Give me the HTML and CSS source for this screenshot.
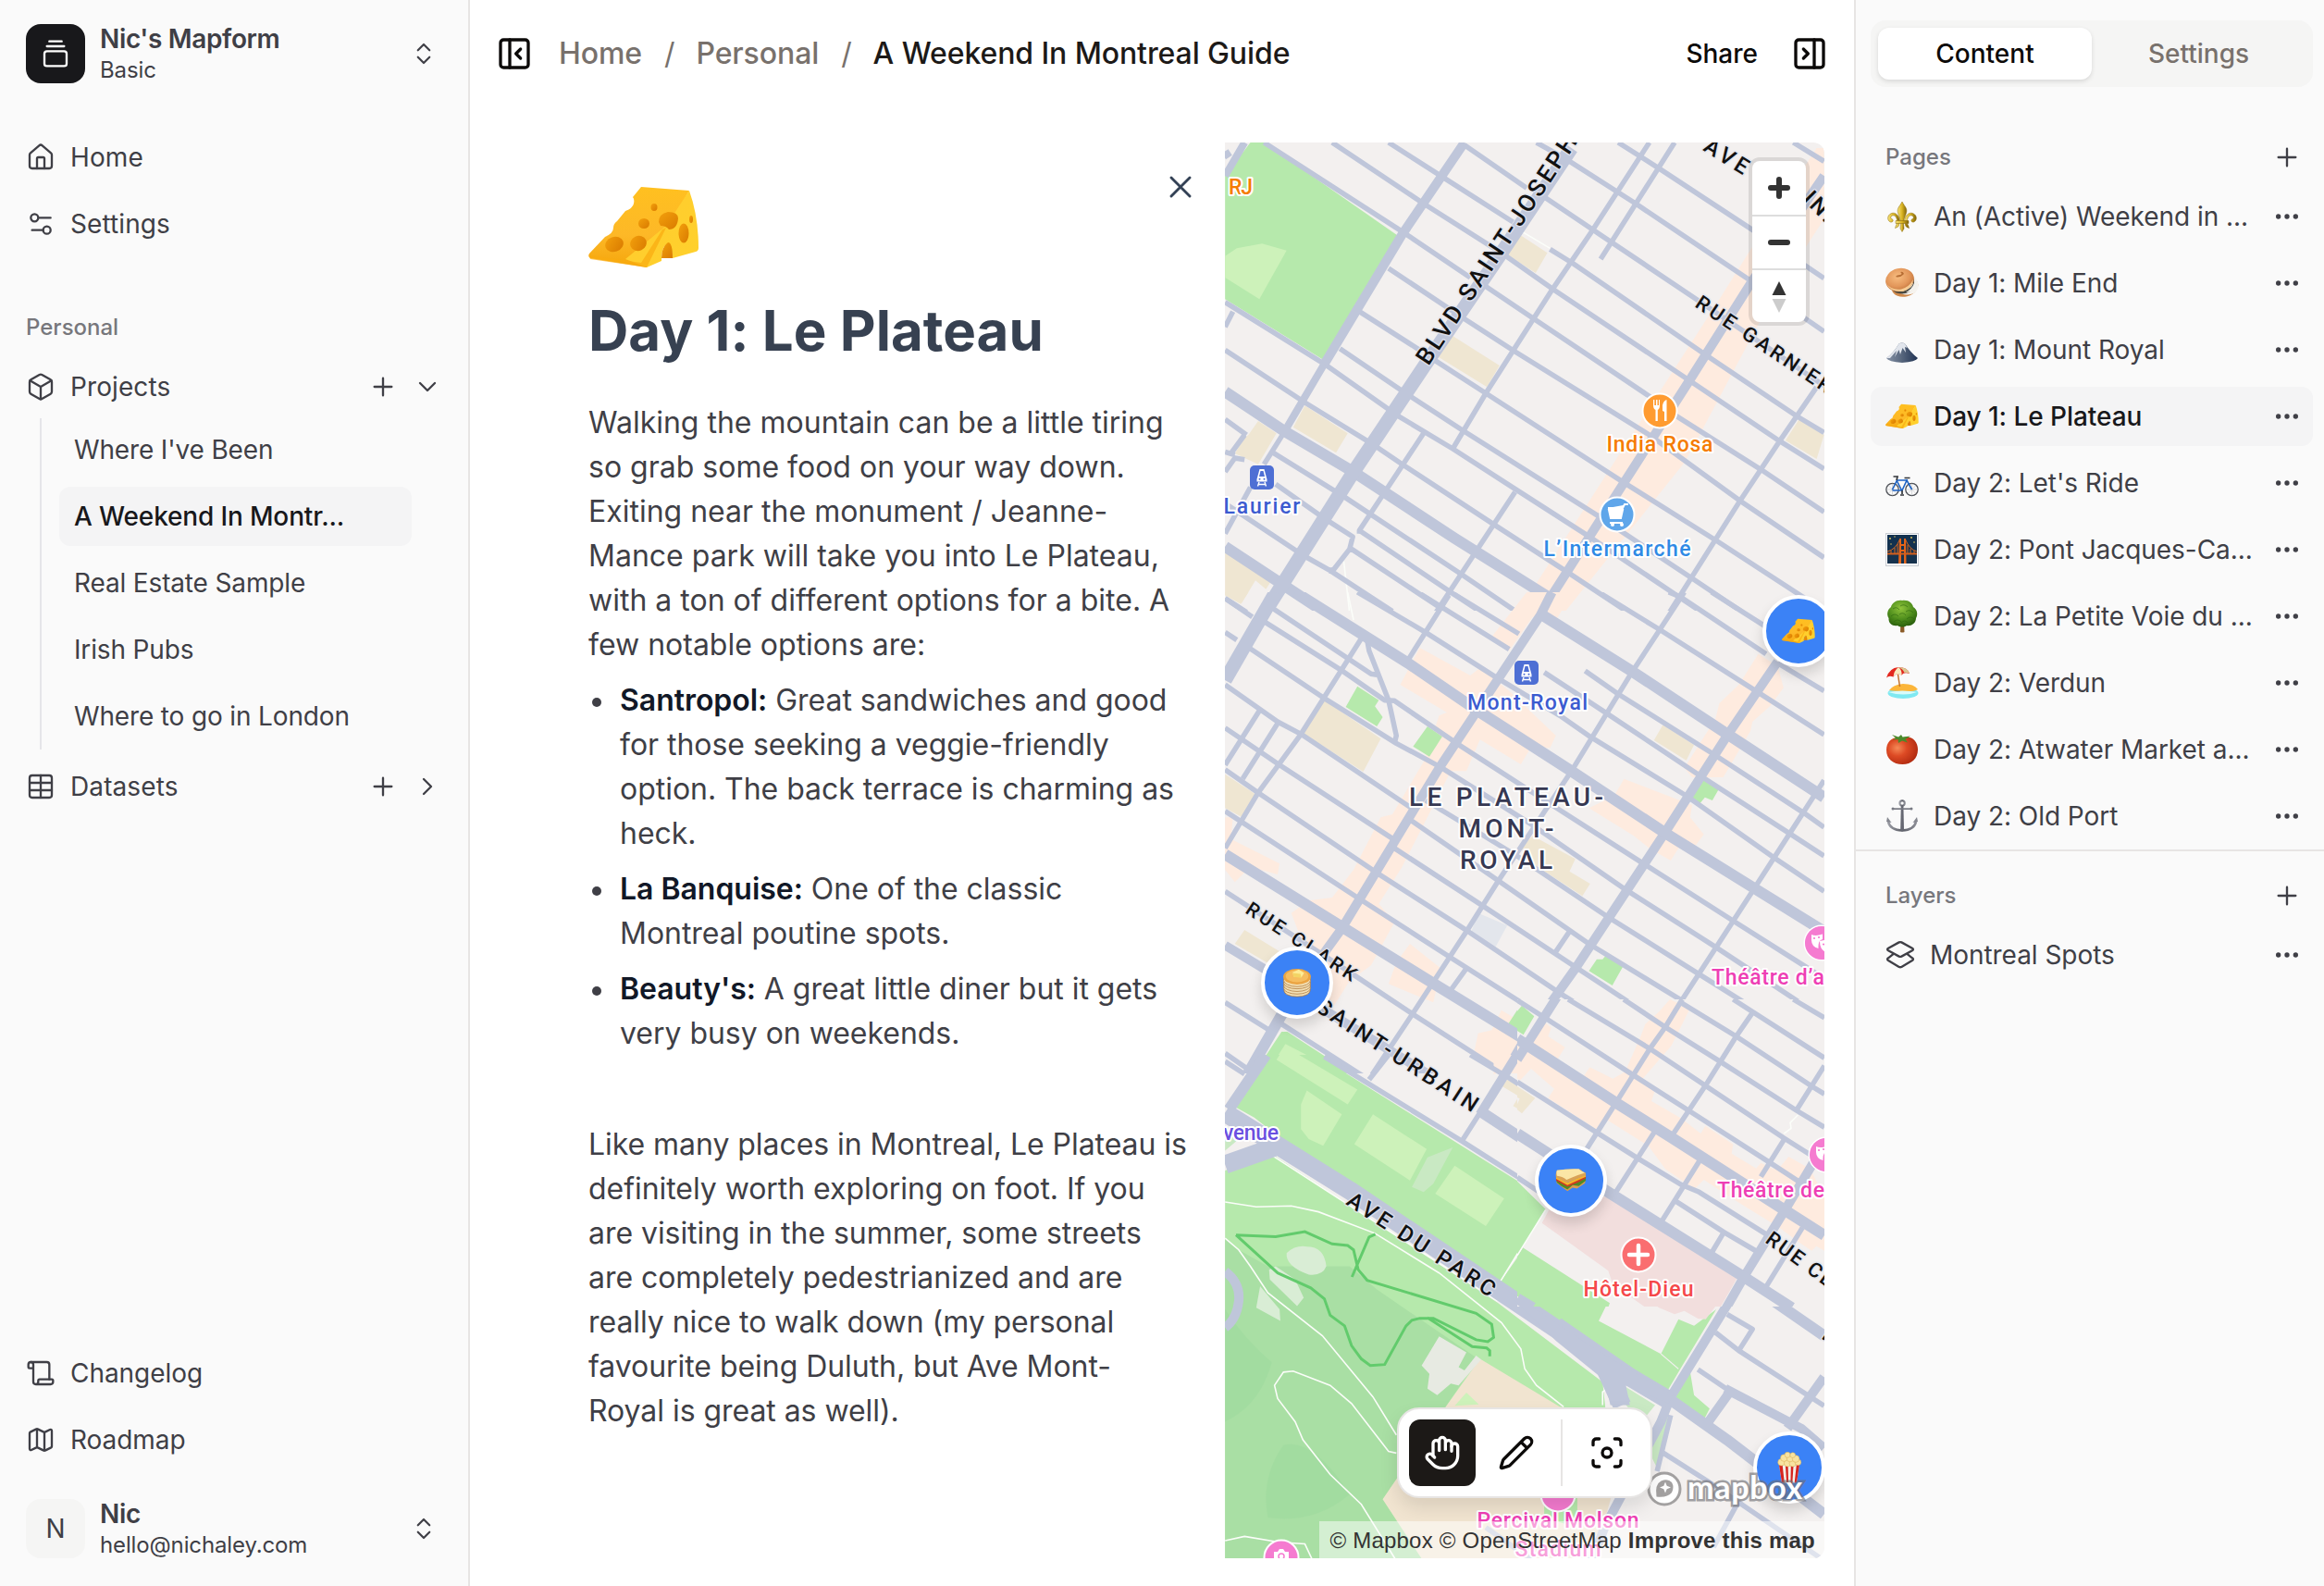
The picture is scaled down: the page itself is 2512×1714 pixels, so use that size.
FILE: index.html
```html
<!DOCTYPE html>
<html lang="en">
<head>
<meta charset="utf-8">
<title>Mapform</title>
<link rel="stylesheet" href="styles.css">
</head>
<body>
<svg class="defs" width="0" height="0" aria-hidden="true">
  <defs>
    <linearGradient id="gCheese" x1="0" y1="0" x2="0" y2="1"><stop offset="0" stop-color="#ffc020"/><stop offset=".6" stop-color="#fdb827"/><stop offset="1" stop-color="#f5a60c"/></linearGradient>
    <linearGradient id="gCheeseSide" x1="0" y1="0" x2="1" y2="1"><stop offset="0" stop-color="#ffcb2e"/><stop offset="1" stop-color="#ffd12c"/></linearGradient>
    <linearGradient id="gHole" x1="0" y1="0" x2="1" y2="1"><stop offset="0" stop-color="#f3a00c"/><stop offset="1" stop-color="#d97a00"/></linearGradient>
    <linearGradient id="gGold" x1="0" y1="0" x2="1" y2="0"><stop offset="0" stop-color="#f6e27a"/><stop offset=".5" stop-color="#d9b320"/><stop offset="1" stop-color="#7d6208"/></linearGradient>
    <radialGradient id="gBagel" cx=".45" cy=".35" r=".7"><stop offset="0" stop-color="#f8bd80"/><stop offset=".6" stop-color="#e2965a"/><stop offset="1" stop-color="#b86a32"/></radialGradient>
    <linearGradient id="gRock" x1="0" y1="0" x2="1" y2="0"><stop offset="0" stop-color="#8793a6"/><stop offset=".5" stop-color="#56657c"/><stop offset="1" stop-color="#1f3152"/></linearGradient>
    <radialGradient id="gTree" cx=".45" cy=".3" r=".7"><stop offset="0" stop-color="#8fc43b"/><stop offset=".6" stop-color="#4e8d1c"/><stop offset="1" stop-color="#2a5f0d"/></radialGradient>
    <radialGradient id="gTomato" cx=".35" cy=".4" r=".75"><stop offset="0" stop-color="#f58a57"/><stop offset=".4" stop-color="#dd4a24"/><stop offset="1" stop-color="#a8240c"/></radialGradient>
    <linearGradient id="gSteel" x1="0" y1="0" x2="1" y2="0"><stop offset="0" stop-color="#9a9ca4"/><stop offset=".5" stop-color="#5b5d66"/><stop offset="1" stop-color="#8b8d95"/></linearGradient>
    <symbol id="cheese" viewBox="0 0 120 88">
      <path d="M57 0 109 4 63 87 2 77Q-1 75 1 72L18 54Q27 50 27 44 27 40 31 37L40 26Q48 23 49 18 50 13 48 11Z" fill="url(#gCheese)"/>
      <path d="M109 4Q119 32 119 66 119 69 116 70L91 77Q90 62 85 62 79 64 79 80L63 87 40 78 84 42Z" fill="url(#gCheeseSide)"/>
      <path d="M1 74 57 82 80 46 84 44 63 87 2 78Z" fill="#f9ab10" opacity=".7"/>
      <g fill="url(#gHole)"><ellipse cx="28" cy="62" rx="10" ry="8" transform="rotate(-20 28 62)"/><ellipse cx="54" cy="61" rx="9" ry="8" transform="rotate(-25 54 61)"/><ellipse cx="60" cy="39.500" rx="6" ry="5.500"/><ellipse cx="71" cy="22" rx="3.500" ry="4"/><path d="M76 38Q76 29 86 27 97 27 97 34 96 46 87 46 84 42 78 42Z"/><ellipse cx="103" cy="50" rx="5.500" ry="10.500"/><ellipse cx="111" cy="35" rx="2" ry="4"/><path d="M79 77Q79 65 86 60 91 60 91 77Z"/></g>
    </symbol>
    <symbol id="fleur" viewBox="0 0 36 36">
      <g fill="url(#gGold)" stroke="#8a6b0c" stroke-width=".5"><path d="M18 2C20.500 7 24 9 22.500 14 21.500 17.500 20 20 19.700 23H16.300C16 20 14.500 17.500 13.500 14 12 9 15.500 7 18 2Z"/><path d="M15.500 23C15 17 11 13 6.500 14.500 1.500 16.500 1.500 22.500 5.500 24 8 24.500 9 22 7.500 21 6 20.500 5 19 6.500 17.500 9.500 15.500 12.500 18.500 12.500 23Z"/><path d="M20.500 23C21 17 25 13 29.500 14.500 34.500 16.500 34.500 22.500 30.500 24 28 24.500 27 22 28.500 21 30 20.500 31 19 29.500 17.500 26.500 15.500 23.500 18.500 23.500 23Z"/><path d="M11 22.500H25V25.500H11Z"/><path d="M16.500 25.500H19.500L20 31 18 34.500 16 31Z"/><path d="M15 25.500Q14.500 30 10.500 30.500 11 28 12.500 25.500ZM21 25.500Q21.500 30 25.500 30.500 25 28 23.500 25.500Z"/></g>
    </symbol>
    <symbol id="bagel" viewBox="0 0 36 36">
      <ellipse cx="21" cy="22" rx="14.500" ry="10.500" transform="rotate(-15 21 22)" fill="#d08a4c"/>
      <ellipse cx="21" cy="18.500" rx="15" ry="11.500" transform="rotate(20 21 18.500)" fill="#f6f3ee"/>
      <path d="M8 25Q18 30 28 22 31 18 30 13 34 18 31 23 25 31 14 29 9 28 8 25Z" fill="#4a4940"/>
      <path d="M31 13Q36 18 33 24 28 28 22 28 29 24 31 18Z" fill="#f3f1ec"/>
      <ellipse cx="15.500" cy="14.500" rx="15.500" ry="12.500" transform="rotate(-12 15.500 14.500)" fill="url(#gBagel)"/>
      <path d="M1 18Q6 26 17 24.500 26 22 30 14 29 24 19 27 5 28 1 18Z" fill="#f6cd94"/>
      <path d="M11 11Q15 13 20 8 19 5 16 6 19 8 16 9 12 9 11 11Z" fill="#a85c24" opacity=".8"/>
    </symbol>
    <symbol id="mountain" viewBox="0 0 36 36">
      <path d="M1 27Q9 21 14.500 11.500 18 9.500 21.500 12 27 21 35 27 33 31 18 32 3 31 1 27Z" fill="url(#gRock)"/>
      <path d="M14.500 11.500Q18 9.500 21.500 12L23.500 16 21 15 22 21 18.500 16 16 23 14.500 18 10 26 12 19 5 27 1 27Q9 21 14.500 11.500Z" fill="#e1e5ec"/>
    </symbol>
    <symbol id="bike" viewBox="0 0 36 36">
      <g fill="none" stroke="#4b4e54" stroke-width="1.300"><circle cx="7.500" cy="25" r="6.700"/><circle cx="28.500" cy="25" r="6.700"/></g>
      <g fill="none" stroke="#b6b9be" stroke-width=".5"><path d="M7.500 18.500V31.500M1 25H14M3 20.500 12 29.500M12 20.500 3 29.500M28.500 18.500V31.500M22 25H35M24 20.500 33 29.500M33 20.500 24 29.500"/></g>
      <path d="M7.500 25 12.500 15H23L28.500 25M12 15 17.500 26H7.500M18 26 23.500 14" fill="none" stroke="#1c62c4" stroke-width="1.600"/>
      <path d="M8.500 11H13L12 15M20.500 12.500H26.500M18 26V30M16 31H20" fill="none" stroke="#33363b" stroke-width="1.700"/>
    </symbol>
    <symbol id="bridge" viewBox="0 0 36 36">
      <path d="M0 0H36V36H0Z" fill="#c8ccd2"/><path d="M1 1H35V35H1Z" fill="#fff"/><path d="M2 2H34V33H2Z" fill="#12314f"/><path d="M2 24H34V33H2Z" fill="#16324d"/>
      <path d="M15 6H17V33H14ZM20 6H22L22.500 33H20Z" fill="#e2641a"/><path d="M16 12H21V14H16ZM16 18H21V20H16Z" fill="#e2641a"/>
      <path d="M2 21.500H34V23.500H2Z" fill="#d35f1d"/><path d="M2 20Q11 18 15.500 7M34 20Q26 18 21.500 7M6 19V22M10 16V22M13 12V22M24 13V22M27 17V22M31 19V22" fill="none" stroke="#d9681f" stroke-width="1"/>
      <g fill="#f0d15c"><circle cx="5" cy="6" r=".9"/><circle cx="10" cy="4" r=".7"/><circle cx="28" cy="5" r=".9"/><circle cx="31" cy="10" r=".8"/><circle cx="6" cy="12" r=".7"/></g>
    </symbol>
    <symbol id="tree" viewBox="0 0 36 36">
      <path d="M16.500 25H20L20.500 35Q18 36 16 35Z" fill="#8a5a26"/>
      <path d="M18 1C25 0 29 4 30 8 35 11 35 17 33 20 33 26 27 29 23 28 20 30 16 30 13 28 8 29 3 26 3.500 20 1 16 2 11 6 8 7 4 12 0 18 1Z" fill="url(#gTree)"/>
      <g fill="none" stroke="#2d660f" stroke-width="1" opacity=".6"><path d="M8 10Q12 7 15 11M16 7Q20 4 24 8M22 13Q26 10 30 14M6 18Q10 14 14 18M15 16Q19 13 22 17M23 21Q27 17 31 21M9 24Q13 20 17 24M17 25Q21 21 24 25"/></g>
    </symbol>
    <symbol id="beach" viewBox="0 0 36 36">
      <ellipse cx="19" cy="29" rx="16.500" ry="6" fill="#7fe9f2"/><path d="M4 26Q8 20 19 19 31 19 35 25 30 28 20 27 10 27 4 26Z" fill="#fbb53a"/><path d="M3 28Q18 25 34 28 20 33 3 28Z" fill="#d9fbfa"/>
      <path d="M13.500 9 15.500 22" stroke="#c4722c" stroke-width="1.500"/>
      <path d="M1 12.500Q4 2 14 1 24 1 26 8 20 6 17.500 9.500 11 6.500 8.500 11.500 4 9.500 1 12.500Z" fill="#e3281f"/><path d="M14 1Q9 5 8.500 11.500 11 6.500 17.500 9.500 18 4 14 1Z" fill="#f8ecc1"/><path d="M14 1Q24 1 26 8 22 6 20.500 7 19 3 14 1Z" fill="#d9cb95"/>
    </symbol>
    <symbol id="tomato" viewBox="0 0 36 36">
      <path d="M18 5.500C28 2 35 9 35 18 35 28 28 34 18.500 34 8 34 1 28 1 18.500 1 9 8 3 18 5.500Z" fill="url(#gTomato)"/>
      <path d="M7 2 14 4.500 17 2 18.500 4.500 27 3.500 21.500 7 24 10.500 18 8.500 14 11 13.500 7 8 7.500 11 5.500Z" fill="#4a8a2a"/>
    </symbol>
    <symbol id="anchor" viewBox="0 0 36 36">
      <g fill="none" stroke="url(#gSteel)" stroke-width="2"><circle cx="18.100" cy="4" r="2.700"/><path d="M3 24Q5 33 18 33.500 31 33 33 24" stroke-width="2.600"/></g>
      <path d="M16.800 7H19.400L20 32 18 35 16.200 32Z" fill="#666872"/><path d="M8 9.300H28V11H8Z" fill="#777982"/><circle cx="8" cy="10.100" r="1.500" fill="#777982"/><circle cx="28" cy="10.100" r="1.500" fill="#777982"/>
      <path d="M2 19 6.500 25 1 24ZM34 19 29.500 25 35 24Z" fill="#85878f"/>
    </symbol>
    <symbol id="pancakes" viewBox="0 0 36 36">
      <g stroke="#a56a2a" stroke-width=".7" fill="#f2dfb4"><ellipse cx="18" cy="27" rx="15" ry="7"/><ellipse cx="18" cy="24" rx="15.500" ry="7"/><ellipse cx="18" cy="21" rx="15.500" ry="7"/><ellipse cx="18" cy="18" rx="15.500" ry="7"/><ellipse cx="18" cy="15" rx="15.500" ry="7.500"/></g>
      <ellipse cx="18" cy="11" rx="15.800" ry="9" fill="#eba443"/><ellipse cx="18" cy="10.500" rx="13" ry="7" fill="#f6bd5f"/>
      <path d="M13 6 20 3 26 7 23 12 14 11Z" fill="#fdeb96"/><path d="M13 7 14 11.500 23 12.500 22 8Z" fill="#f3d465"/>
    </symbol>
    <symbol id="sandwich" viewBox="0 0 36 36">
      <path d="M1 19 14 25 35 15 34 21 25 27 20 26 14 30 2 21Z" fill="#d99c4f"/><path d="M1 16 14 23 35 14 35 18 27 24 20 23 14 28 7 24 2 20Z" fill="#4f8a28"/><path d="M1 15 14 21 35 12 35 15 26 20 14 25 1 18Z" fill="#cf3b21"/><path d="M1 13.500 14 20 35 11 35 13.500 25 18 14 23 1 16Z" fill="#f5b62a"/>
      <path d="M2 6Q16 4 29 5 31 8 35 9L35 12 13 20.500 1 14Q0 10 2 6Z" fill="#d9a256"/><path d="M2 6Q14 4 27 4.500 29 7 34 9 24 12 13 17 8 13 2 12.500 1 9 2 6Z" fill="#fbe6a6"/>
    </symbol>
    <symbol id="popcorn" viewBox="0 0 36 36">
      <path d="M6 13H30L26.500 35Q18 37 9.500 35Z" fill="#f3efe9"/><path d="M6 13H10L12.500 35.500 9.500 35ZM13.500 13H16.500L17 36H15ZM20 13H23L21.500 36H19.500ZM26.500 13H30L26.500 35 24 35.500Z" fill="#d6251f"/>
      <g fill="#f8e3a0" stroke="#d6a94b" stroke-width=".5"><circle cx="9" cy="12" r="4"/><circle cx="16" cy="13" r="4"/><circle cx="22" cy="13" r="4"/><circle cx="28" cy="12" r="3.500"/><circle cx="12" cy="7" r="4"/><circle cx="19" cy="7.500" r="4"/><circle cx="25.500" cy="8" r="4"/><circle cx="16" cy="3.500" r="3.200"/><circle cx="22" cy="3.800" r="3"/></g>
    </symbol>
    <symbol id="plus" viewBox="0 0 24 24"><path d="M5 12h14M12 5v14"/></symbol>
    <symbol id="updown" viewBox="0 0 24 24"><path d="m7 15 5 5 5-5M7 9l5-5 5 5"/></symbol>
    <symbol id="dots" viewBox="0 0 24 24"><circle cx="12" cy="12" r="1"/><circle cx="19" cy="12" r="1"/><circle cx="5" cy="12" r="1"/></symbol>
    <symbol id="train" viewBox="0 0 26 26"><rect x="0" y="0" width="26" height="26" rx="5" fill="#4e6fd4"/><path d="M10.500 4H15.500L18.500 15V17.500H7.500V15Z" fill="#fff"/><path d="M11.500 6H14.500L16 12H10Z" fill="#4e6fd4"/><circle cx="10.500" cy="14.800" r="1" fill="#4e6fd4"/><circle cx="15.500" cy="14.800" r="1" fill="#4e6fd4"/><path d="M10 18 8.500 22.500M16 18 17.500 22.500M9 20.500H17" stroke="#fff" stroke-width="1.400"/></symbol>
    <symbol id="mask" viewBox="0 0 36 36"><circle cx="18" cy="18" r="18" fill="#f57bd0"/><path d="M7 9Q12 11 19 8.500V14Q14 15 14.500 24 7 22 7 15Z" fill="#fff"/><path d="M16 16Q22 14 29 15.500 29 27 23 28 16 26 16 16Z" fill="#fff"/><g fill="#f57bd0"><circle cx="10" cy="13" r="1.100"/><circle cx="15" cy="12" r="1.100"/><circle cx="20" cy="19.500" r="1.100"/><circle cx="25" cy="19.500" r="1.100"/></g></symbol>
  </defs>
</svg>
<div class="app">
  <aside class="side">
    <div class="account">
      <div class="logo"><svg class="ic" viewBox="0 0 24 24"><path d="M7 2h10M5 6h14"/><rect x="3" y="10" width="18" height="12" rx="2"/></svg></div>
      <div class="who"><strong>Nic's Mapform</strong><span>Basic</span></div>
      <svg class="ic ic28"><use href="#updown"/></svg>
    </div>
    <nav class="menu">
      <a class="item"><svg class="ic" viewBox="0 0 24 24"><path d="M15 21v-8a1 1 0 0 0-1-1h-4a1 1 0 0 0-1 1v8"/><path d="M3 10a2 2 0 0 1 .709-1.528l7-5.999a2 2 0 0 1 2.582 0l7 5.999A2 2 0 0 1 21 10v9a2 2 0 0 1-2 2H5a2 2 0 0 1-2-2z"/></svg><span>Home</span></a>
      <a class="item"><svg class="ic" viewBox="0 0 24 24"><path d="M20 7h-9M14 17H5"/><circle cx="17" cy="17" r="3"/><circle cx="7" cy="7" r="3"/></svg><span>Settings</span></a>
    </nav>
    <h2 class="label">Personal</h2>
    <div class="item group"><svg class="ic" viewBox="0 0 24 24"><path d="M21 8a2 2 0 0 0-1-1.730l-7-4a2 2 0 0 0-2 0l-7 4A2 2 0 0 0 3 8v8a2 2 0 0 0 1 1.730l7 4a2 2 0 0 0 2 0l7-4A2 2 0 0 0 21 16Z"/><path d="m3.300 7 8.700 5 8.700-5M12 22V12"/></svg><span class="grow">Projects</span><svg class="ic"><use href="#plus"/></svg><svg class="ic" viewBox="0 0 24 24"><path d="m6 9 6 6 6-6"/></svg></div>
    <div class="tree">
      <a class="leaf">Where I've Been</a>
      <a class="leaf active">A Weekend In Montr...</a>
      <a class="leaf">Real Estate Sample</a>
      <a class="leaf">Irish Pubs</a>
      <a class="leaf">Where to go in London</a>
    </div>
    <div class="item group"><svg class="ic" viewBox="0 0 24 24"><path d="M12 3v18M3 9h18M3 15h18"/><rect x="3" y="3" width="18" height="18" rx="2"/></svg><span class="grow">Datasets</span><svg class="ic"><use href="#plus"/></svg><svg class="ic" viewBox="0 0 24 24"><path d="m9 18 6-6-6-6"/></svg></div>
    <nav class="menu bottom">
      <a class="item"><svg class="ic" viewBox="0 0 24 24"><path d="M19 17V5a2 2 0 0 0-2-2H4"/><path d="M8 21h12a2 2 0 0 0 2-2v-1a1 1 0 0 0-1-1H11a1 1 0 0 0-1 1v1a2 2 0 1 1-4 0V5a2 2 0 1 0-4 0v2a1 1 0 0 0 1 1h3"/></svg><span>Changelog</span></a>
      <a class="item"><svg class="ic" viewBox="0 0 24 24"><path d="M14.106 5.553a2 2 0 0 0 1.788 0l3.659-1.830A1 1 0 0 1 21 4.619v12.764a1 1 0 0 1-.553.894l-4.553 2.277a2 2 0 0 1-1.788 0l-4.212-2.106a2 2 0 0 0-1.788 0l-3.659 1.830A1 1 0 0 1 3 19.381V6.618a1 1 0 0 1 .553-.894l4.553-2.277a2 2 0 0 1 1.788 0zM15 5.764v15M9 3.236v15"/></svg><span>Roadmap</span></a>
    </nav>
    <div class="account user">
      <div class="avatar">N</div>
      <div class="who"><strong>Nic</strong><span>hello@nichaley.com</span></div>
      <svg class="ic ic28"><use href="#updown"/></svg>
    </div>
  </aside>

  <main class="main">
    <header class="top">
      <svg class="ic bold" viewBox="0 0 24 24"><rect x="3" y="3" width="18" height="18" rx="2"/><path d="M9 3v18M16 15l-3-3 3-3"/></svg>
      <div class="crumbs"><span>Home</span><i>/</i><span>Personal</span><i>/</i><b>A Weekend In Montreal Guide</b></div>
      <span class="share">Share</span>
      <svg class="ic bold" viewBox="0 0 24 24"><rect x="3" y="3" width="18" height="18" rx="2"/><path d="M15 3v18M8 9l3 3-3 3"/></svg>
    </header>
    <div class="content">
      <article class="article">
        <svg class="close" viewBox="0 0 24 24"><path d="M18 6 6 18M6 6l12 12"/></svg>
        <svg class="hero"><use href="#cheese"/></svg>
        <h1>Day 1: Le Plateau</h1>
        <p>Walking the mountain can be a little tiring<br>so grab some food on your way down.<br>Exiting near the monument / Jeanne-<br>Mance park will take you into Le Plateau,<br>with a ton of different options for a bite. A<br>few notable options are:</p>
        <ul>
          <li><b>Santropol:</b> Great sandwiches and good<br>for those seeking a veggie-friendly<br>option. The back terrace is charming as<br>heck.</li>
          <li><b>La Banquise:</b> One of the classic<br>Montreal poutine spots.</li>
          <li><b>Beauty's:</b> A great little diner but it gets<br>very busy on weekends.</li>
        </ul>
        <p class="after">Like many places in Montreal, Le Plateau is<br>definitely worth exploring on foot. If you<br>are visiting in the summer, some streets<br>are completely pedestrianized and are<br>really nice to walk down (my personal<br>favourite being Duluth, but Ave Mont-<br>Royal is great as well).</p>
      </article>
      <section class="map">
        <svg class="canvas" viewBox="0 0 648 1530" width="648" height="1530">
          <rect width="648" height="1530" fill="#f3f0ef"/>
          <!-- north tile -->
          <svg class="tile" x="-4" y="-14" width="660" height="520" viewBox="0 0 1569 1560" preserveAspectRatio="none">
            <path class="shop" d="M1530 60H1549V290L1410 560 1225 1000 1190 1080 880 1569H760L1050 1000 1275 560 1360 390Z"/>
            <path class="park" d="M75 42H110L455 345 260 745 10 550V150Z"/><path class="lawn" d="M10 410 40 385 105 370 168 392 98 550 10 480Z"/>
            <path class="school" d="M760 335 838 400 808 465 728 400ZM590 665 715 765 683 835 555 735ZM215 895 325 985 295 1048 185 965ZM95 945 142 985 95 1085 35 1050 60 1000 70 990ZM1485 940 1549 990 1530 1068 1450 1008ZM10 1370 128 1465 115 1490 88 1462 52 1537 10 1510Z"/>
            <path class="path" d="M765 325 845 385M315 1400 330 1569"/>
            <path class="rd w5" d="M110 42 470 335 640 480M670 500 805 615 1130 890M285 42 520 240 720 400 855 520 1205 815 1435 1010 1549 1100M430 42 570 155 750 300M845 388 905 435 1250 735 1480 930 1549 982M625 50 785 190M820 210 955 325 1215 545 1549 830M810 42 885 95 1065 240 1360 490 1549 655M1020 42 1130 130 1365 325 1549 482M1470 42 1549 103M430 450 620 610 755 720 1100 990 1335 1205 1549 1388M355 590 510 715M545 745 680 855 1035 1145 1275 1335 1549 1560M305 710 480 860 620 975 965 1250 1210 1455 1340 1565M10 560 265 760 450 925 595 1035 755 1165 940 1315 1235 1565M10 715 215 885 395 1025 465 1085 700 1280 890 1435 1050 1569M1165 925 1390 1105 1549 1240M130 1045 315 1190 615 1440 765 1569M140 1150 270 1265 338 1320 330 1360 290 1425 275 1432M10 1212 210 1380 280 1430 440 1562M355 1300 590 1500 680 1575M335 1360 585 1569M10 1520 65 1565M10 940 65 990"/>
            <path class="rd w5" d="M1100 42 955 325 850 520 680 855 595 1035M1165 42 975 420M1530 835 1435 1010 1330 1210 1150 1569M520 985 355 1300V1310M755 1175 550 1569M30 590 10 640M60 990 25 1050M10 1045 35 1055M10 1110 35 1065 60 1070M75 1160 10 1310M160 985 110 1085"/>
            <path class="rd w7" d="M60 42 10 150M10 70 20 90M265 760 160 985"/>
            <path class="rd w9" d="M625 42 465 340 265 760M1549 150 1360 500 1205 810 1035 1145 820 1569"/>
            <path class="rd w11" d="M10 850 165 980 340 1110 600 1325 840 1515 820 1560M10 1352 260 1560"/>
            <path class="rd w13" d="M900 60 720 400 520 770 340 1110 110 1569"/>
          </svg>
          <!-- middle tile -->
          <svg class="tile" x="-4" y="486" width="660" height="520" viewBox="0 0 1569 1560" preserveAspectRatio="none">
            <path class="shop" d="M785 0H905L860 90 800 80 740 190 695 145ZM510 180 640 270 665 245 740 320 860 465 845 505 795 505 770 558 665 478 630 580 590 580 465 890 405 1010 445 1070 385 1210 330 1260 290 1340 265 1320 180 1040 225 1000 285 990 340 900 410 730 440 720 520 550 560 400 580 390 460 300ZM485 1140 565 1220 545 1330 430 1270 450 1200ZM10 730H30L25 800 150 880 145 915 75 890 35 940 10 900ZM1380 200 1430 240 1445 310 1410 370 1365 420 1360 450 1290 600 1210 600 1190 570 1270 410 1280 360 1330 300ZM1035 605 1210 690 1205 730 1240 785 1220 820 1180 820 1155 870 1100 830 1060 790 945 700 1010 660ZM720 1355 885 1480 850 1569H720L650 1490 660 1430 695 1420ZM1165 1320 1205 1350 1090 1569H940L1030 1550 1090 1400Z"/>
            <path class="school" d="M265 350 410 475 365 582 208 455ZM10 590 88 655 52 728 10 700ZM1135 430 1215 495 1195 545 1112 480ZM800 790 910 865 895 905 948 945 928 985 800 880 770 830ZM60 1095 150 1165 130 1210 35 1140ZM10 0H70L50 38 10 10Z"/>
            <path d="M660 1040 735 1080 705 1150 640 1110Z" fill="#e3e6ec"/>
            <path class="park" d="M350 305 405 350 395 370 415 405 400 435 320 372ZM530 435 568 468 535 533 493 500ZM1238 608 1278 640 1262 675 1243 665 1225 692 1203 672ZM990 1175 1033 1212 1005 1275 945 1228 965 1190 980 1190ZM768 1340 805 1375 775 1435 735 1405ZM155 1425H170L345 1569H80Z"/>
            <path class="lawn" d="M165 1465 325 1569H205L142 1510Z"/>
            <path class="path" d="M325 0 340 90"/>
            <path class="rd w5" d="M350 0 525 130 705 275 870 400 950 470 1195 660 1420 860 1549 970M505 0 740 185M590 0 765 135M830 260 985 388 1225 590 1460 782 1549 855M935 255 1020 330 1265 525 1500 718 1549 762M970 0 1125 120 1380 325 1549 462M1150 0 1180 15 1400 200M1260 0 1400 112M1430 230 1549 320M10 20 80 80M10 130 40 155M130 50 385 265 400 268M110 95 305 250 420 350 445 352 605 490 850 690 1085 880 1315 1065 1549 1252M65 175 260 340 450 490 565 568 800 755 1040 965 1270 1150 1549 1382M10 300 145 420 205 460 495 705M490 742 712 935 945 1140 1185 1325 1470 1569M525 675 760 855 990 1050 1230 1240 1549 1492M10 440 150 560 445 803M445 830 670 1015 910 1215 1145 1410 1330 1569M10 575 95 650 400 910 635 1100 870 1300 1100 1480 1210 1569M10 710 350 990 590 1185 820 1370 1050 1569M10 970 340 1240 495 1370 740 1569M10 1330 130 1425M155 1400 365 1569M10 1495 90 1565"/>
            <path class="rd w5" d="M1190 0 1055 260 900 580 710 940 630 1100 490 1370 385 1569M1549 610 1370 960 1180 1330 1065 1569M585 10 480 220M360 150 205 460 95 650 10 830M100 380 10 560M145 425 55 605M630 1220 590 1290M895 1100 860 1165M1365 1360 1265 1569M1549 1510 1520 1569M375 155 380 190 430 350 450 465 445 490"/>
            <path class="rd w9" d="M850 0 820 75 560 570 310 1090 270 1160 155 1370M1430 225 1300 465 1140 780 910 1220 780 1450 725 1569M10 1145 125 1232M240 1335 580 1600"/>
            <path class="rd w11" d="M190 0 480 230 660 385 900 580 1140 780 1370 960 1549 1100M820 70 1060 260 1300 460 1549 665M10 850 310 1085 560 1280 780 1450 920 1569M160 1360 65 1569"/>
            <path class="rd w13" d="M140 0 10 285"/>
          </svg>
          <!-- south tile -->
          <svg class="tile" x="-4" y="986" width="660" height="560" viewBox="0 0 1569 1568" preserveAspectRatio="none">
            <path class="shop" d="M700 0H770L790 60 855 100 835 130 900 165 960 205 1120 280 1300 420 1440 470 1420 530 1549 590V400L1480 330 1450 310 1370 320 1310 250 1250 262 1240 230 1110 150 1090 90 1130 0H1010L990 50 940 40 900 80 800 0 700 60Z"/>
            <path class="school" d="M735 75 805 125 780 175 750 155 765 125 722 95Z"/>
            <path class="park" d="M110 0H245L800 410 835 460 715 690 330 390 150 250 85 190 40 160V130ZM10 350 130 300 710 750 980 990 990 1100 870 1569H10ZM778 585 995 745 970 805 1130 905 1175 800 1215 820 1272 770 1180 950 1145 1020 715 690ZM1205 960 1215 1030 1255 1070 1240 1105 1165 1040Z"/>
            <path d="M10 555 45 590 120 640 330 640 400 710 660 920 580 1060 415 1345 540 1569H10Z" fill="#a9dfa4"/>
            <path d="M10 770Q60 860 130 930 100 1060 10 1110ZM160 1180Q240 1160 330 1330 240 1420 120 1400 100 1280 160 1180Z" fill="#9fda9e" opacity=".6"/>
            <path d="M1130 905 1175 950" stroke="#f3f0ef" stroke-width="3"/>
            <path class="lawn" d="M150 0H200L350 105 325 150 142 15ZM220 108 310 180 262 275 225 255 205 225V150ZM390 180 528 285 485 380 342 270ZM600 335 727 435 680 518 550 420Z"/>
            <path d="M595 280 545 390 520 415 490 400 530 310ZM1040 1005 1115 1060 1080 1110 1040 1060ZM1150 1085 1120 1250 1090 1180ZM10 220 60 240 10 290Z" fill="#c9e9c3"/>
            <path d="M220 580Q265 580 270 640 260 670 225 665 165 640 168 600 190 575 220 580ZM140 640 190 680 212 735 195 760 125 680 123 650ZM100 700 150 770 152 805 90 765Z" fill="#d9edd5"/>
            <path d="M665 920 870 1065 1060 1100 980 1430 870 1569H540L415 1345 580 1060Z" fill="#f1e4d0"/>
            <path class="lawn" d="M630 1022 662 1058 600 1062Z"/><path class="park" d="M830 1340H915V1430L830 1400Z"/>
            <path d="M560 852 630 900 610 945 625 955 655 910 668 922 610 1000 590 995 555 1030 530 1010 535 965 515 940Z" fill="#e7eae2"/>
            <path d="M835 465 860 430H990L1322 680 1245 800 1225 798 1190 775 1165 785 1125 765 990 650 825 510Z" fill="#f2dedd"/>
            <path class="path" d="M10 445 90 460 180 457 250 475 395 540 560 660 720 810 770 890 780 950 810 1000 880 1065M10 555 45 590 75 640 120 720 260 850 390 1035 450 1150M450 1205 430 1200 335 1055 280 1000 185 957 160 960 137 1000 145 1040 190 1110 210 1165 280 1270 360 1360 470 1569M10 1470 60 1457 150 1475 215 1480 235 1530M830 470 715 690M125 300 710 745M980 1060V1020L1000 1005"/>
            <path class="route" d="M396 543 380 551 336 672M38 545 140 550 215 535 285 572 325 577 340 590 352 650 375 682 655 782 695 815 700 855 685 868 655 862 545 797 510 797 490 803 475 820 420 937 383 940 360 920 335 880 317 820 280 788 265 738 230 705 145 660 38 545M530 795 645 883 682 887 690 895V912"/>
            <path class="rd w5" d="M640 0 740 70 960 240 1070 310 1185 395 1215 408 1400 545M265 5 620 262 810 405M10 20 60 58M960 0 1060 65 1240 200 1405 325 1549 432M1100 0 1240 100 1450 250 1549 320M1170 440 1290 530 1385 600M1130 498 1340 665M1270 840 1330 895 1549 1062M1225 952 1310 1020M1300 785 1365 830 1330 895M430 0 380 75M1090 0 940 280M1110 235 1005 410M1225 320 1135 500M1290 540 1255 600M1495 530 1400 705M665 175 618 262M1130 1200 1250 1290 1549 1530M1330 1350 1265 1490M1155 1090 1120 1260M680 1430 800 1530"/>
            <path class="rd w9" d="M760 0 665 180M1549 275 1450 465 1340 680 1155 1035 1130 1110 985 1430 940 1569M1295 1010 1490 1130 1549 1190M1310 1015 1240 1130M1549 975 1455 1130M10 655Q50 690 45 745 40 800 10 825"/>
            <path class="rd w11" d="M815 0 1010 140 1230 300 1549 542M665 170 820 290 1000 420 1340 680 1549 850M1150 1040 1300 1165 1549 1390M115 0 20 165"/>
            <path class="rd w15" d="M10 175 150 278 330 410 710 710 900 860M135 280 10 332M860 820 1050 975 1150 1045M985 945 1030 1060"/>
            <path d="M720 700 860 865 985 985 1000 1060H1050L1040 1000 1150 1055 1160 1030 960 890Z" fill="#bfc6da"/>
          </svg>
          <!-- south-east tile -->
          <svg class="tile" x="316" y="926" width="332" height="332" viewBox="0 0 996 996">
            <rect width="996" height="996" fill="#f3f0ef"/>
            <path class="shop" d="M495 0 560 30 500 150 400 265 445 300 435 330 530 385 595 435 610 410 700 470 695 500 775 548 790 530 830 550 855 540 880 510 950 550 996 640V815L970 800 955 815 910 785 850 740 720 660 605 585 575 615 480 550 425 475 290 390 255 420 100 320 120 290 45 225 10 262 0 257V150L85 70 110 92 100 120 155 155 130 195 185 272 215 250 235 220 310 257 350 235 400 120 415 80 460 40Z"/>
            <path class="school" d="M0 282 58 320 15 370 0 358V340L8 322 0 318Z"/>
            <path class="park" d="M15 20 55 55 20 115 0 102V38ZM0 590 92 680 0 830ZM18 805 300 985 296 996H50L0 962V835Z"/>
            <path d="M80 725 120 650 290 640 712 905 660 996H412L310 925 295 880Z" fill="#f2dedd"/>
            <path class="path" d="M92 682 0 830M910 375 885 400 888 418 865 435"/>
            <path class="rd w5" d="M0 3 90 60 375 245 555 360 820 530 920 595M165 0 430 160 610 280 865 450 960 510M345 0 480 90 655 200 905 360 996 415M530 10 710 120 960 285 996 307M700 0 996 190M895 0 996 60M0 268 255 430 390 515 530 600 590 625 805 760M515 655 670 755 790 825M0 577 80 630"/>
            <path class="rd w5" d="M535 0 480 90 430 160 320 335 225 485M765 40 710 120 610 280 500 445M996 215 905 360M865 455 790 575M925 740 805 935M445 430 315 632M590 525 465 725M670 755 630 822"/>
            <path class="rd w9" d="M130 -10 0 195M960 530 870 680 735 900 675 1005"/>
            <path class="rd w11" d="M0 128 320 335 500 448 870 685 996 765M0 435 300 628 735 900 890 1000M0 970 50 1000"/>
          </svg>
          <!-- street names -->
          <g class="street">
            <text transform="translate(220 242) rotate(-56.400)" font-size="26" textLength="292">BLVD SAINT-JOSEPH</text>
            <text transform="translate(507 177) rotate(33.500)" font-size="22" textLength="172">RUE GARNIER</text>
            <text transform="translate(516 8) rotate(32)" font-size="24" textLength="52">AVE</text>
            <text transform="translate(624 62) rotate(45)" font-size="24" textLength="36">IN.</text>
            <text transform="translate(21 832) rotate(33)" font-size="21" textLength="138">RUE CLARK</text>
            <text transform="translate(97 938) rotate(33)" font-size="24" textLength="203">SAINT-URBAIN</text>
            <text transform="translate(130 1147) rotate(33)" font-size="24" textLength="186">AVE DU PARC</text>
            <text transform="translate(583 1188) rotate(36)" font-size="22" textLength="84">RUE CL</text>
            <text transform="translate(644 1292) rotate(36)" font-size="22">R</text>
          </g>
          <g class="place" text-anchor="middle">
            <text x="470" y="334" textLength="115" fill="#f57c00">India Rosa</text>
            <text x="424" y="447" textLength="159" fill="#2f8ae5">L’Intermarché</text>
            <text x="40" y="401" textLength="83" fill="#3c5bd0">Laurier</text>
            <text x="17" y="56" textLength="26" fill="#f57c00">RJ</text>
            <text x="327" y="613" textLength="130" fill="#3c5bd0">Mont-Royal</text>
            <text x="587" y="910" textLength="122" fill="#ee3fb5">Théâtre d’a</text>
            <text x="590" y="1140" textLength="116" fill="#ee3fb5">Théâtre de</text>
            <text x="28" y="1078" textLength="60" fill="#6a4fe0">venue</text>
            <text x="447" y="1247" textLength="119" fill="#f5484a">Hôtel-Dieu</text>
            <text x="360" y="1497" textLength="175" fill="#ee3fb5">Percival Molson</text>
            <text x="360" y="1528" textLength="93" fill="#ee3fb5">Stadium</text>
          </g>
          <g class="district" text-anchor="middle">
            <text x="304" y="717" textLength="210">LE PLATEAU-</text>
            <text x="304" y="751" textLength="103">MONT-</text>
            <text x="304" y="785" textLength="100">ROYAL</text>
          </g>
          <!-- points of interest -->
          <g stroke="#fff" stroke-width="2">
            <circle cx="470" cy="290" r="18.500" fill="#ff9b30"/><circle cx="424" cy="402" r="18.500" fill="#5fa6ea"/><circle cx="447" cy="1202" r="18.500" fill="#fa6e70"/><circle cx="360" cy="1461" r="18.500" fill="#f57bd0"/><circle cx="61" cy="1529" r="18.500" fill="#f57bd0"/><circle cx="645" cy="865" r="18.500" fill="#f57bd0"/><circle cx="650" cy="1094" r="18.500" fill="#f57bd0"/>
          </g>
          <path d="M463 278V284Q463 288 465.500 289V301H467.800V289Q470 288 470 284V278H469V284H467.500V278H466V284H464.300V278ZM473 290V284Q474 279 477.500 278V301H475V291Z" fill="#fff"/>
          <path d="M414 395H430L432 391H436M415 397H430L428 406H417ZM416 411H430" fill="#fff" stroke="#fff" stroke-width="2"/><circle cx="419" cy="413" r="2" fill="#fff"/><circle cx="429" cy="413" r="2" fill="#fff"/>
          <path d="M447 1192V1212M437 1202H457" stroke="#fff" stroke-width="4.500" stroke-linecap="round"/>
          <path d="M53 1523H57L59 1520H63L65 1523H69V1534H53Z" fill="#fff"/><circle cx="61" cy="1528" r="3" fill="none" stroke="#f57bd0" stroke-width="1.500"/>
          <use href="#train" x="27" y="349" width="26" height="26"/><use href="#train" x="313" y="560" width="26" height="26"/>
          <use href="#mask" x="627" y="847" width="36" height="36"/><use href="#mask" x="632" y="1076" width="36" height="36"/>
        </svg>
        <div class="pin p1"><svg><use href="#cheese"/></svg></div>
        <div class="pin p2"><svg><use href="#pancakes"/></svg></div>
        <div class="pin p3"><svg><use href="#sandwich"/></svg></div>
        <div class="pin p4"><svg><use href="#popcorn"/></svg></div>
        <div class="zoomctl">
          <span><svg viewBox="0 0 58 58"><path d="M29 20V38M20 29H38" stroke="#333" stroke-width="6" stroke-linecap="round"/></svg></span>
          <span><svg viewBox="0 0 58 58"><path d="M20 28H38" stroke="#333" stroke-width="6" stroke-linecap="round"/></svg></span>
          <span><svg viewBox="0 0 58 58"><path d="M21.500 27 29 12 36.500 27Z" fill="#333"/><path d="M21.500 31 29 46 36.500 31Z" fill="#ccc"/></svg></span>
        </div>
        <div class="brand"><svg width="38" height="38" viewBox="0 0 38 38"><circle cx="19" cy="19" r="17" fill="#fff" stroke="#a3a1a1" stroke-width="3"/><path d="M10.500 27.500Q8.500 14 15.500 10.500 23 7.500 27 12 30 17 27 23 22 29 10.500 27.500Z" fill="#a3a1a1"/><path d="M20 11.500 21.700 15.800 26 17.500 21.700 19.200 20 23.500 18.300 19.200 14 17.500 18.300 15.800Z" fill="#fff"/></svg><b>mapbox</b></div>
        <div class="tools">
          <span class="tool on"><svg class="ic bold" viewBox="0 0 24 24"><path d="M18 11V6a2 2 0 0 0-4 0M14 10V4a2 2 0 0 0-4 0v2M10 10.500V6a2 2 0 0 0-4 0v8"/><path d="M18 8a2 2 0 1 1 4 0v6a8 8 0 0 1-8 8h-2c-2.800 0-4.500-.860-5.990-2.340l-3.600-3.600a2 2 0 0 1 2.830-2.820L7 15"/></svg></span>
          <span class="tool"><svg class="ic bold" viewBox="0 0 24 24"><path d="M21.174 6.812a1 1 0 0 0-3.986-3.987L3.842 16.174a2 2 0 0 0-.5.830l-1.321 4.352a.5.5 0 0 0 .623.622l4.353-1.320a2 2 0 0 0 .830-.497zM15 5l4 4"/></svg></span>
          <i></i>
          <span class="tool"><svg class="ic bold" viewBox="0 0 24 24"><circle cx="12" cy="12" r="3"/><path d="M3 7V5a2 2 0 0 1 2-2h2M17 3h2a2 2 0 0 1 2 2v2M21 17v2a2 2 0 0 1-2 2h-2M7 21H5a2 2 0 0 1-2-2v-2"/></svg></span>
        </div>
        <div class="credit">© Mapbox © OpenStreetMap <b>Improve this map</b></div>
      </section>
    </div>
  </main>

  <aside class="panel">
    <div class="tabs"><span class="tab on">Content</span><span class="tab">Settings</span></div>
    <div class="head"><h2>Pages</h2><svg class="ic"><use href="#plus"/></svg></div>
    <div class="pages">
      <div class="page"><svg class="emo"><use href="#fleur"/></svg><span>An (Active) Weekend in ...</span><svg class="ic dots"><use href="#dots"/></svg></div>
      <div class="page"><svg class="emo"><use href="#bagel"/></svg><span>Day 1: Mile End</span><svg class="ic dots"><use href="#dots"/></svg></div>
      <div class="page"><svg class="emo"><use href="#mountain"/></svg><span>Day 1: Mount Royal</span><svg class="ic dots"><use href="#dots"/></svg></div>
      <div class="page active"><svg class="emo"><use href="#cheese"/></svg><span>Day 1: Le Plateau</span><svg class="ic dots"><use href="#dots"/></svg></div>
      <div class="page"><svg class="emo"><use href="#bike"/></svg><span>Day 2: Let's Ride</span><svg class="ic dots"><use href="#dots"/></svg></div>
      <div class="page"><svg class="emo"><use href="#bridge"/></svg><span>Day 2: Pont Jacques-Ca...</span><svg class="ic dots"><use href="#dots"/></svg></div>
      <div class="page"><svg class="emo"><use href="#tree"/></svg><span>Day 2: La Petite Voie du ...</span><svg class="ic dots"><use href="#dots"/></svg></div>
      <div class="page"><svg class="emo"><use href="#beach"/></svg><span>Day 2: Verdun</span><svg class="ic dots"><use href="#dots"/></svg></div>
      <div class="page"><svg class="emo"><use href="#tomato"/></svg><span>Day 2: Atwater Market a...</span><svg class="ic dots"><use href="#dots"/></svg></div>
      <div class="page"><svg class="emo"><use href="#anchor"/></svg><span>Day 2: Old Port</span><svg class="ic dots"><use href="#dots"/></svg></div>
    </div>
    <div class="layers">
      <div class="head"><h2>Layers</h2><svg class="ic"><use href="#plus"/></svg></div>
      <div class="page layer"><svg class="ic" viewBox="0 0 24 24"><path d="M11 1.800 2.300 6.500Q.8 7.500 2.300 8.500L11 13.200Q12 13.700 13 13.200L21.700 8.500Q23.200 7.500 21.700 6.500L13 1.800Q12 1.300 11 1.800Z"/><path d="M6.500 11.200 2.300 14.500Q.8 15.500 2.300 16.500L11 21.700Q12 22.200 13 21.700L21.700 16.500Q23.200 15.500 21.700 14.500L17.500 11.200"/></svg><span>Montreal Spots</span><svg class="ic dots"><use href="#dots"/></svg></div>
    </div>
  </aside>
</div>
</body>
</html>
```
FILE: styles.css
```css
* { box-sizing: border-box; }
body { margin: 0; background: #fff; color: #3f3f46; font: 400 28px/40px Inter, "Liberation Sans", sans-serif; }
h1, h2, p, ul { margin: 0; padding: 0; }
.defs { position: absolute; }
.app { display: flex; width: 2512px; height: 1714px; overflow: hidden; }
.ic { width: 32px; height: 32px; flex: none; fill: none; stroke: currentColor; stroke-width: 1.75; stroke-linecap: round; stroke-linejoin: round; }
.ic28 { width: 30px; height: 30px; }
.ic.bold { stroke-width: 2; }

.side { width: 508px; flex: none; display: flex; flex-direction: column; background: #fafafa; border-right: 2px solid #e7e5e4; padding: 26px 28px 30px 28px; }
.account { display: flex; align-items: center; gap: 16px; height: 64px; }
.account .ic28 { margin-left: auto; margin-right: 5px; }
.logo, .avatar { width: 64px; height: 64px; border-radius: 16px; display: flex; align-items: center; justify-content: center; flex: none; }
.logo { background: #18181b; color: #fff; }
.logo .ic { width: 32px; height: 32px; }
.avatar { background: #f5f5f4; }
.who { display: flex; flex-direction: column; line-height: 33px; padding-top: 1px; }
.who strong { font-weight: 600; letter-spacing: -.35px; }
.who span { font-size: 24px; line-height: 33px; letter-spacing: -.13px; }
.menu { display: flex; flex-direction: column; gap: 8px; margin-top: 48px; }
.item { display: flex; align-items: center; gap: 16px; height: 64px; letter-spacing: .1px; }
.grow { flex: 1; }
.label { font-size: 24px; font-weight: 500; color: #77777c; line-height: 64px; margin-top: 48px; }
.group { height: 66px; margin-top: -1px; }
.tree { display: flex; flex-direction: column; gap: 8px; margin: 1px 0 8px 15px; padding: 2px 33px 0 19px; border-left: 2px solid #e5e5e9; height: 358px; }
.leaf { height: 64px; flex: none; line-height: 64px; padding-left: 16px; border-radius: 12px; letter-spacing: -.15px; white-space: nowrap; }
.leaf.active { background: #f4f4f5; color: #18181b; font-weight: 500; }
.bottom { margin-top: auto; }
.bottom .item { letter-spacing: -.05px; }
.user { margin-top: 32px; }

.main { flex: 1; display: flex; flex-direction: column; padding: 0 32px 30px; }
.top { display: flex; align-items: center; height: 116px; color: #0c0a09; font-size: 32px; line-height: 40px; font-weight: 500; margin-left: -4px; margin-right: -4px; }
.top .ic { width: 40px; height: 40px; }
.top .ic:last-child { margin-left: 36px; }
.share { font-size: 28px; }
.crumbs { display: flex; gap: 24px; margin-left: 28px; color: #78716c; flex: 1; letter-spacing: -.1px; }
.crumbs i { font-style: normal; font-weight: 400; margin-right: -1px; }
.crumbs b { font-weight: 500; color: #1c1917; }
.content { display: flex; margin-top: 38px; height: 1530px; }
.article { flex: 1; position: relative; padding: 48px 0 0 96px; font-size: 32px; line-height: 48px; color: #3f3f46; white-space: nowrap; }
.close { position: absolute; right: 28px; top: 28px; width: 40px; height: 40px; fill: none; stroke: #334155; stroke-width: 1.700; stroke-linecap: round; }
.hero { display: block; width: 120px; height: 88px; }
h1 { font-size: 60px; line-height: 72px; margin-top: 31px; font-weight: 700; color: #374151; letter-spacing: .03px; }
.article p { margin-top: 40px; }
ul { margin-left: 34px; list-style: none; }
li { margin-top: 12px; position: relative; letter-spacing: -.03px; }
li::before { content: ""; position: absolute; left: -30px; top: 21px; width: 10px; height: 10px; border-radius: 50%; background: #3f3f46; }
li b { font-weight: 600; color: #111827; }
.article .after { margin-top: 72px; letter-spacing: -.05px; }

.map { position: relative; width: 648px; height: 1530px; overflow: hidden; border-radius: 0 12px 12px 0; }
.canvas { display: block; }
.rd { fill: none; stroke: #bfc6da; stroke-linejoin: round; vector-effect: non-scaling-stroke; }
.w5 { stroke-width: 5.5px; }
.w7 { stroke-width: 8px; }
.w9 { stroke-width: 10px; }
.w11 { stroke-width: 12px; }
.w13 { stroke-width: 15px; }
.w15 { stroke-width: 20px; }
.park { fill: #b6e9ac; }
.lawn { fill: #cdf2ba; }
.school { fill: #efe6d2; }
.shop { fill: #feebdf; }
.path { fill: none; stroke: #fbfdf9; stroke-width: 1.6px; vector-effect: non-scaling-stroke; }
.route { fill: none; stroke: #62cb6c; stroke-width: 3px; vector-effect: non-scaling-stroke; }
.street, .place, .district { font-family: Roboto, "Liberation Sans", sans-serif; font-weight: 500; paint-order: stroke; stroke-linejoin: round; }
.street { fill: #111; stroke: rgba(225, 228, 238, .75); stroke-width: 3px; }
.place { font-size: 23px; stroke: #fff; stroke-width: 4px; }
.district { font-size: 28px; fill: #363852; stroke: #fff; stroke-width: 4px; }
.pin { position: absolute; width: 78px; height: 78px; margin: -39px 0 0 -39px; border-radius: 50%; border: 4px solid #fff; background: #3b82f6; display: flex; align-items: center; justify-content: center; box-shadow: 0 8px 14px rgba(0, 0, 0, .14); }
.pin svg { width: 36px; height: 34px; }
.p1 { left: 620px; top: 528px; }
.p2 { left: 78px; top: 908px; }
.p3 { left: 374px; top: 1122px; }
.p4 { left: 610px; top: 1432px; }
.zoomctl { position: absolute; right: 20px; top: 20px; width: 58px; border-radius: 8px; background: #fff; box-shadow: 0 0 0 4px rgba(0, 0, 0, .1); }
.zoomctl span { display: block; height: 58px; }
.zoomctl span + span { border-top: 2px solid #ddd; }
.zoomctl svg { display: block; width: 58px; height: 58px; }
.tools { position: absolute; left: 186px; bottom: 65px; height: 98px; width: 276px; border: 2px solid #e7e5e4; border-radius: 24px; background: #fff; display: flex; align-items: center; padding: 0 11px; gap: 8px; color: #0c0a09; box-shadow: 0 10px 20px rgba(0, 0, 0, .1); }
.tool { width: 72px; height: 72px; display: flex; align-items: center; justify-content: center; border-radius: 12px; }
.tool .ic { width: 40px; height: 40px; }
.tool.on { background: #1c1917; color: #fff; }
.tools i { width: 2px; height: 72px; background: #e7e5e4; margin: 0 4px 0 4px; }
.brand { position: absolute; left: 456px; top: 1436px; display: flex; align-items: center; gap: 6px; height: 38px; }
.brand b { font: 700 34px/38px Lato, sans-serif; color: #fff; -webkit-text-stroke: 5px rgba(110, 110, 115, .65); paint-order: stroke fill; margin-top: -4px; letter-spacing: .7px; }
.credit { position: absolute; right: 0; bottom: 0; height: 40px; padding: 1px 10px 0 11px; background: rgba(255, 255, 255, .5); font: 24px/39px "Liberation Sans", Arial, sans-serif; letter-spacing: .22px; color: #333; white-space: nowrap; }

.panel { width: 508px; flex: none; background: #fafafa; border-left: 2px solid #e7e5e4; padding-top: 22px; }
.tabs { display: flex; margin: 0 12px 0 16px; height: 72px; padding: 8px; border-radius: 16px; background: #f5f5f4; font-weight: 500; }
.tab { flex: 1; display: flex; align-items: center; justify-content: center; border-radius: 12px; color: #78716c; }
.tab.on { background: #fff; color: #0c0a09; box-shadow: 0 2px 5px rgba(0, 0, 0, .12); }
.head { display: flex; align-items: center; justify-content: space-between; padding: 0 24px 0 32px; height: 64px; }
.tabs + .head { margin-top: 44px; }
.head h2 { font-size: 24px; font-weight: 500; color: #77777c; }
.pages { display: flex; flex-direction: column; gap: 8px; }
.page { display: flex; align-items: center; height: 64px; margin: 0 12px 0 16px; padding: 0 12px 0 16px; border-radius: 12px; gap: 16px; letter-spacing: -.05px; white-space: nowrap; }
.page span { flex: 1; min-width: 0; }
.page.active { background: #f4f4f5; color: #18181b; font-weight: 500; }
.emo { width: 36px; height: 36px; flex: none; }
.dots { margin-left: -16px; stroke-width: 2; color: #3f3f46; }
.layers { border-top: 2px solid #e7e5e4; margin-top: 4px; padding-top: 16px; }
.layer .ic:first-child { width: 32px; }
```
